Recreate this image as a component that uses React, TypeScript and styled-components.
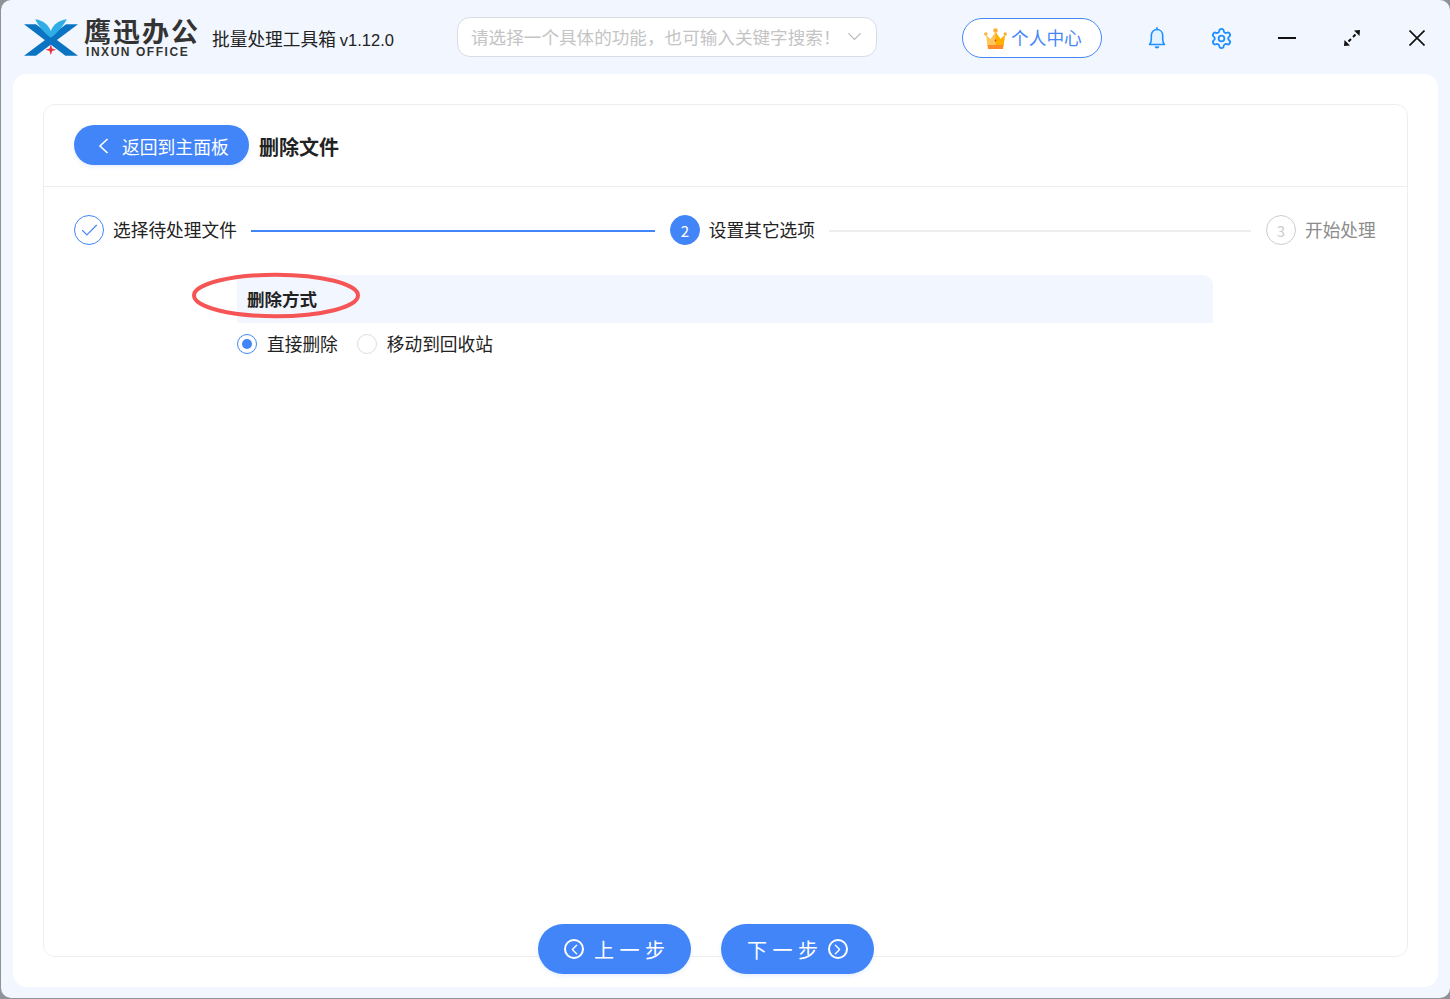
import { ReactNode } from "react";
import styled, { createGlobalStyle } from "styled-components";
import { ChevronDown, ChevronLeft, Check, ChevronRight, Settings } from "lucide-react";

const cjk = `"Noto Sans CJK SC", "Noto Sans", sans-serif`;

const GlobalStyle = createGlobalStyle`
	html, body {
		margin: 0;
		padding: 0;
		background: #8f9296;
	}
	* {
		box-sizing: border-box;
	}
`;

const Logo = () => (
	<svg width="54" height="37" viewBox="0 0 163 110">
		<polygon points="0,15 36,15 163,110 125,110" fill="#0b74c2" />
		<polygon points="0,110 36,110 163,15 127,15" fill="#0b74c2" />
		<path d="M34 0 C58 4 74 16 81 36 C88 16 104 4 129 0 C118 22 100 42 81 56 C62 42 44 22 34 0Z" fill="#2fade6" />
		<path d="M81 76 L85 88 L97 92 L85 96 L81 108 L77 96 L65 92 L77 88Z" fill="#e8343c" />
	</svg>
);

const CrownMark = styled.svg`
	flex: none;
	margin-top: 3px;
`;

const Crown = () => (
	<CrownMark width="23" height="22" viewBox="0 0 23 22">
		<circle cx="11.5" cy="2.5" r="2.3" fill="#fbb03b" />
		<circle cx="1.8" cy="6" r="1.7" fill="#fbb03b" />
		<circle cx="21.2" cy="6" r="1.7" fill="#fbb03b" />
		<path d="M2 7 L6.5 11 L11.5 4 L16.5 11 L21 7 L19.5 18 H3.5Z" fill="#fdc75c" />
		<path d="M11.5 4 L16.5 11 L21 7 L19.5 18 H11.5Z" fill="#ffb000" />
		<path d="M3.5 17 H19.5 L19 21 H4Z" fill="#ff8a2a" />
		<path d="M11.5 11 L12.5 12.5 L11.5 14 L10.5 12.5Z" fill="#d9541e" />
	</CrownMark>
);

const Bell = () => (
	<svg width="18" height="22" viewBox="0 0 18 22" fill="#e3f2ff" stroke="#1e90ff" strokeWidth="1.6">
		<path d="M1.5 17.5 H16.5 C15 16 14.7 14.5 14.7 12 V8.5 C14.7 5 12.3 2.5 9 2.5 C5.7 2.5 3.3 5 3.3 8.5 V12 C3.3 14.5 3 16 1.5 17.5Z" strokeLinejoin="round" />
		<path d="M9 0.8 V2.5" strokeLinecap="round" />
		<path d="M7.3 19.6 C7.8 21 10.2 21 10.7 19.6" fill="#1e90ff" />
	</svg>
);

const Minus = () => (
	<svg width="18" height="4" viewBox="0 0 18 4">
		<path d="M0 2 H18" stroke="#111" strokeWidth="2" />
	</svg>
);

const Expand = () => (
	<svg width="18" height="18" viewBox="0 0 18 18" fill="#111">
		<polygon points="17,1 16.5,7 11,1.5" />
		<polygon points="1,17 1.5,11 7,16.5" />
		<path d="M12.5 5.5 L10 8 M5.5 12.5 L8 10" stroke="#111" strokeWidth="2" />
	</svg>
);

const Close = () => (
	<svg width="16" height="16" viewBox="0 0 16 16">
		<path d="M0.5 0.5 L15.5 15.5 M15.5 0.5 L0.5 15.5" stroke="#111" strokeWidth="1.7" />
	</svg>
);

const BackArrow = () => (
	<svg width="11" height="16" viewBox="0 0 11 16" fill="none" stroke="#fff" strokeWidth="1.6">
		<path d="M9.5 1 L2 8 L9.5 15" />
	</svg>
);

const Window = styled.div`
	width: 1449px;
	height: 998px;
	margin-left: 1px;
	display: flex;
	flex-direction: column;
	background: #f2f6ff;
	border-radius: 10px;
	font-family: ${cjk};
	overflow: hidden;
`;

const Header = styled.header`
	height: 74px;
	flex: none;
	display: flex;
	align-items: center;
	padding-left: 23px;
`;

const Brand = styled.div`
	display: flex;
	align-items: center;
	gap: 6px;
	width: 176px;
`;

const BrandText = styled.div`
	display: flex;
	flex-direction: column;
`;

const BrandName = styled.div`
	margin-top: 1px;
	font-size: 27px;
	line-height: 27px;
	letter-spacing: 2px;
	font-weight: 700;
	color: #333;
	white-space: nowrap;
`;

const BrandSub = styled.div`
	margin: 2px 0 0 2px;
	font-family: "Liberation Sans", sans-serif;
	font-size: 12px;
	line-height: 12px;
	font-weight: 700;
	letter-spacing: 1.55px;
	color: #333;
	white-space: nowrap;
`;

const AppTitle = styled.div`
	margin: 2px 0 0 12px;
	width: 182px;
	font-size: 17.7px;
	color: #222;
	white-space: nowrap;
`;

const Version = styled.span`
	margin-left: 4px;
	font-family: "Liberation Sans", sans-serif;
	font-size: 16.5px;
`;

const Search = styled.div`
	margin-left: 63px;
	width: 420px;
	height: 40px;
	display: flex;
	align-items: center;
	justify-content: space-between;
	padding: 0 10px 2px 13px;
	background: #fff;
	border: 1px solid #d9dce3;
	border-radius: 13px;
	font-size: 17.6px;
	color: #c4c4c4;
	white-space: nowrap;
	svg {
		flex: none;
	}
`;

const Profile = styled.button`
	margin: 2px 0 0 85px;
	width: 140px;
	height: 40px;
	display: flex;
	align-items: center;
	padding: 0 0 2px 21px;
	gap: 4px;
	background: #fff;
	border: 1px solid #4687f8;
	border-radius: 20px;
	font-family: inherit;
	font-size: 17.7px;
	color: #4687f8;
`;

const IconRow = styled.div`
	margin: 2px 0 0 22px;
	display: flex;
`;

const IconSlot = styled.div`
	width: 65px;
	height: 40px;
	display: flex;
	align-items: center;
	justify-content: center;
	color: #1e90ff;
`;

const Panel = styled.main`
	flex: 1;
	margin: 0 12px 11px 12px;
	padding: 30px;
	background: #fff;
	border-radius: 14px;
	display: flex;
`;

const Card = styled.section`
	position: relative;
	flex: 1;
	border: 1px solid #eeeeee;
	border-radius: 12px;
`;

const CardHead = styled.div`
	height: 82px;
	display: flex;
	align-items: center;
	gap: 10px;
	padding: 0 30px 1px;
	border-bottom: 1px solid #eeeeee;
`;

const BackButton = styled.button`
	width: 175px;
	height: 40px;
	display: flex;
	align-items: center;
	gap: 13px;
	padding: 1px 0 0 24px;
	background: #4285f8;
	border: 0;
	border-radius: 20px;
	box-shadow: 0 2px 4px rgba(66, 133, 248, 0.12);
	font-family: inherit;
	font-size: 17.8px;
	color: #fff;
`;

const PageTitle = styled.h1`
	margin: 2px 0 0;
	font-size: 20px;
	font-weight: 700;
	color: #222;
`;

const Steps = styled.div`
	display: flex;
	align-items: center;
	padding: 28px 30px 0;
`;

const StepCircle = styled.span<{ $state: "done" | "active" | "todo" }>`
	flex: none;
	width: 30px;
	height: 30px;
	display: flex;
	align-items: center;
	justify-content: center;
	border-radius: 50%;
	font-size: 15px;
	border: 1px solid ${(p) => (p.$state === "todo" ? "#cccccc" : "#4285f8")};
	background: ${(p) => (p.$state === "active" ? "#4285f8" : "#fff")};
	color: ${(p) => (p.$state === "active" ? "#fff" : p.$state === "todo" ? "#cccccc" : "#4285f8")};
`;

const StepLabel = styled.span<{ $muted?: boolean }>`
	margin: -2px 0 0 9px;
	font-size: 17.7px;
	white-space: nowrap;
	color: ${(p) => (p.$muted ? "#8c8c8c" : "#222")};
`;

const StepLine = styled.span<{ $width: number; $on?: boolean }>`
	flex: none;
	width: ${(p) => p.$width}px;
	height: 2px;
	margin: 1px 15px 0 14px;
	background: ${(p) => (p.$on ? "#4285f8" : "#eeeeee")};
`;

const Section = styled.div`
	position: relative;
	margin: 30px 194px 0 193px;
`;

const SectionTitle = styled.h2`
	margin: 0;
	height: 48px;
	display: flex;
	align-items: center;
	padding: 0 0 2px 10px;
	background: #f2f6ff;
	border-radius: 0 10px 0 0;
	font-size: 17.5px;
	font-weight: 700;
	color: #222;
`;

const Highlight = styled.svg`
	position: absolute;
	left: -45px;
	top: -3px;
`;

const RadioRow = styled.div`
	display: flex;
	align-items: center;
	padding-top: 8px;
	gap: 19px;
`;

const RadioOption = styled.label`
	display: flex;
	align-items: center;
	gap: 10px;
	font-size: 17.7px;
	color: #222;
`;

const RadioText = styled.span`
	margin-top: -1px;
`;

const RadioMark = styled.span<{ $on?: boolean }>`
	width: 20px;
	height: 20px;
	display: flex;
	align-items: center;
	justify-content: center;
	border-radius: 50%;
	background: #fff;
	border: 1px solid ${(p) => (p.$on ? "#4285f8" : "#dddddd")};
	&::after {
		content: "";
		width: 10px;
		height: 10px;
		border-radius: 50%;
		background: ${(p) => (p.$on ? "#4285f8" : "transparent")};
	}
`;

const Footer = styled.div`
	position: absolute;
	left: 494px;
	bottom: -18px;
	display: flex;
	gap: 30px;
`;

const StepButton = styled.button<{ $gap: number }>`
	width: 153px;
	height: 50px;
	display: flex;
	align-items: center;
	gap: ${(p) => p.$gap}px;
	padding: 0 0 0 26px;
	background: #4285f8;
	border: 0;
	border-radius: 25px;
	box-shadow: 0 2px 4px rgba(66, 133, 248, 0.12);
	font-family: inherit;
	font-size: 20px;
	letter-spacing: 5.5px;
	color: #fff;
`;

const RoundIcon = styled.span`
	flex: none;
	width: 20px;
	height: 20px;
	display: flex;
	align-items: center;
	justify-content: center;
	border: 2px solid #fff;
	border-radius: 50%;
	svg {
		flex: none;
	}
`;

const Step = ({ n, state, label }: { n: ReactNode; state: "done" | "active" | "todo"; label: string }) => (
	<>
		<StepCircle $state={state}>{n}</StepCircle>
		<StepLabel $muted={state === "todo"}>{label}</StepLabel>
	</>
);

export default function App() {
	return (
		<>
			<GlobalStyle />
			<Window>
				<Header>
					<Brand>
						<Logo />
						<BrandText>
							<BrandName>鹰迅办公</BrandName>
							<BrandSub>INXUN OFFICE</BrandSub>
						</BrandText>
					</Brand>
					<AppTitle>
						批量处理工具箱<Version>v1.12.0</Version>
					</AppTitle>
					<Search>
						请选择一个具体的功能，也可输入关键字搜索！
						<ChevronDown size={23} strokeWidth={1.2} color="#b5b5b5" />
					</Search>
					<Profile>
						<Crown />
						个人中心
					</Profile>
					<IconRow>
						<IconSlot>
							<Bell />
						</IconSlot>
						<IconSlot>
							<Settings size={23} strokeWidth={1.9} />
						</IconSlot>
						<IconSlot>
							<Minus />
						</IconSlot>
						<IconSlot>
							<Expand />
						</IconSlot>
						<IconSlot>
							<Close />
						</IconSlot>
					</IconRow>
				</Header>
				<Panel>
					<Card>
						<CardHead>
							<BackButton>
								<BackArrow />
								返回到主面板
							</BackButton>
							<PageTitle>删除文件</PageTitle>
						</CardHead>
						<Steps>
							<Step n={<Check size={21} strokeWidth={1.3} />} state="done" label="选择待处理文件" />
							<StepLine $width={404} $on />
							<Step n="2" state="active" label="设置其它选项" />
							<StepLine $width={422} />
							<Step n="3" state="todo" label="开始处理" />
						</Steps>
						<Section>
							<SectionTitle>删除方式</SectionTitle>
							<Highlight width="170" height="50" viewBox="0 0 170 50">
								<ellipse cx="84" cy="23.5" rx="82" ry="20.8" fill="none" stroke="#f65555" strokeWidth="4" />
							</Highlight>
							<RadioRow>
								<RadioOption>
									<RadioMark $on />
									<RadioText>直接删除</RadioText>
								</RadioOption>
								<RadioOption>
									<RadioMark />
									<RadioText>移动到回收站</RadioText>
								</RadioOption>
							</RadioRow>
						</Section>
						<Footer>
							<StepButton $gap={10}>
								<RoundIcon>
									<ChevronLeft size={17} strokeWidth={1.9} />
								</RoundIcon>
								上一步
							</StepButton>
							<StepButton $gap={4}>
								下一步
								<RoundIcon>
									<ChevronRight size={17} strokeWidth={1.9} />
								</RoundIcon>
							</StepButton>
						</Footer>
					</Card>
				</Panel>
			</Window>
		</>
	);
}
